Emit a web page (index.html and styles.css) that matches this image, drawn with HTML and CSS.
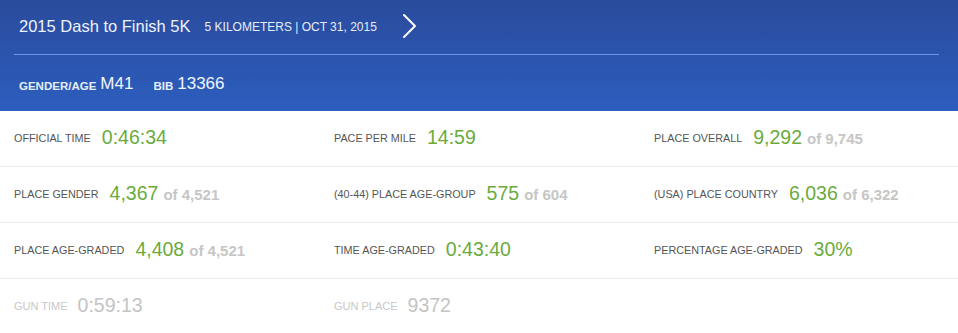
FILE: index.html
```html
<!DOCTYPE html>
<html>
<head>
<meta charset="utf-8">
<link rel="stylesheet" href="styles.css">
</head>
<body>
<div class="page">
  <header class="hero">
    <div class="hero-top">
      <span class="race-title">2015 Dash to Finish 5K</span>
      <span class="race-meta">5 KILOMETERS | OCT 31, 2015</span>
      <svg class="chevron" width="16" height="26" viewBox="0 0 16 26"><path d="M2 2 L13 13 L2 24" fill="none" stroke="#ffffff" stroke-width="2" stroke-linecap="round" stroke-linejoin="round"/></svg>
    </div>
    <div class="hero-bottom">
      <span class="hero-label">GENDER/AGE</span><span class="hero-value">M41</span>
      <span class="hero-label bib">BIB</span><span class="hero-value">13366</span>
    </div>
  </header>
  <section class="stats">
    <div class="row">
      <div class="cell"><span class="label">OFFICIAL TIME</span><span class="value">0:46:34</span></div>
      <div class="cell"><span class="label">PACE PER MILE</span><span class="value">14:59</span></div>
      <div class="cell"><span class="label">PLACE OVERALL</span><span class="value">9,292</span><span class="of">of 9,745</span></div>
    </div>
    <div class="row">
      <div class="cell"><span class="label">PLACE GENDER</span><span class="value">4,367</span><span class="of">of 4,521</span></div>
      <div class="cell"><span class="label">(40-44) PLACE AGE-GROUP</span><span class="value">575</span><span class="of">of 604</span></div>
      <div class="cell"><span class="label">(USA) PLACE COUNTRY</span><span class="value">6,036</span><span class="of">of 6,322</span></div>
    </div>
    <div class="row">
      <div class="cell"><span class="label">PLACE AGE-GRADED</span><span class="value">4,408</span><span class="of">of 4,521</span></div>
      <div class="cell"><span class="label">TIME AGE-GRADED</span><span class="value">0:43:40</span></div>
      <div class="cell"><span class="label">PERCENTAGE AGE-GRADED</span><span class="value">30%</span></div>
    </div>
    <div class="row muted">
      <div class="cell"><span class="label">GUN TIME</span><span class="value">0:59:13</span></div>
      <div class="cell"><span class="label">GUN PLACE</span><span class="value">9372</span></div>
      <div class="cell"></div>
    </div>
  </section>
</div>
</body>
</html>
```
FILE: styles.css
```css
* { box-sizing: border-box; }
html, body { margin: 0; padding: 0; background: #ffffff; }
body { font-family: "Liberation Sans", Arial, sans-serif; width: 958px; height: 333px; overflow: hidden; }
.page { display: flex; flex-direction: column; }
.hero {
  height: 111px;
  background: linear-gradient(180deg, #2a4b9c 0%, #2b57b2 65%, #2c5ebf 100%);
  color: #ffffff;
  padding: 0 19px 0 19px;
}
.hero-top {
  height: 55px;
  display: flex;
  align-items: center;
  border-bottom: 1px solid #6f97e6;
  margin-left: -5px;
  padding-left: 5px;
  padding-bottom: 2px;
}
.race-title { font-size: 16.5px; color: #eef3ff; }
.race-meta { font-size: 12px; margin-left: 14px; margin-top: 1px; color: #e6edfb; }
.chevron { margin-left: 25px; }
.hero-bottom {
  height: 56px;
  display: flex;
  align-items: center;
  padding-top: 2px;
}
.hero-label { font-size: 11.5px; font-weight: bold; color: #e6edfb; margin-right: 4px; margin-top: 3px; }
.hero-label.bib { margin-left: 20px; }
.hero-value { font-size: 17px; color: #f2f5ff; }
.stats { display: flex; flex-direction: column; }
.row {
  display: grid;
  grid-template-columns: 320px 320px 318px;
  height: 56px;
  border-bottom: 1px solid #ececec;
}
.row.muted { border-bottom: none; }
.cell { display: flex; align-items: center; padding-left: 14px; padding-bottom: 3px; }
.label { font-size: 10.8px; color: #555555; margin-right: 11px; margin-top: 1px; }
.value { font-size: 19.5px; color: #6aab3c; }
.of { font-size: 15px; font-weight: bold; color: #c6c6c6; margin-left: 5px; margin-top: 3px; }
.muted .label { color: #c8c8c8; font-size: 11px; margin-right: 10px; }
.muted .value { color: #c4c4c4; }
```
